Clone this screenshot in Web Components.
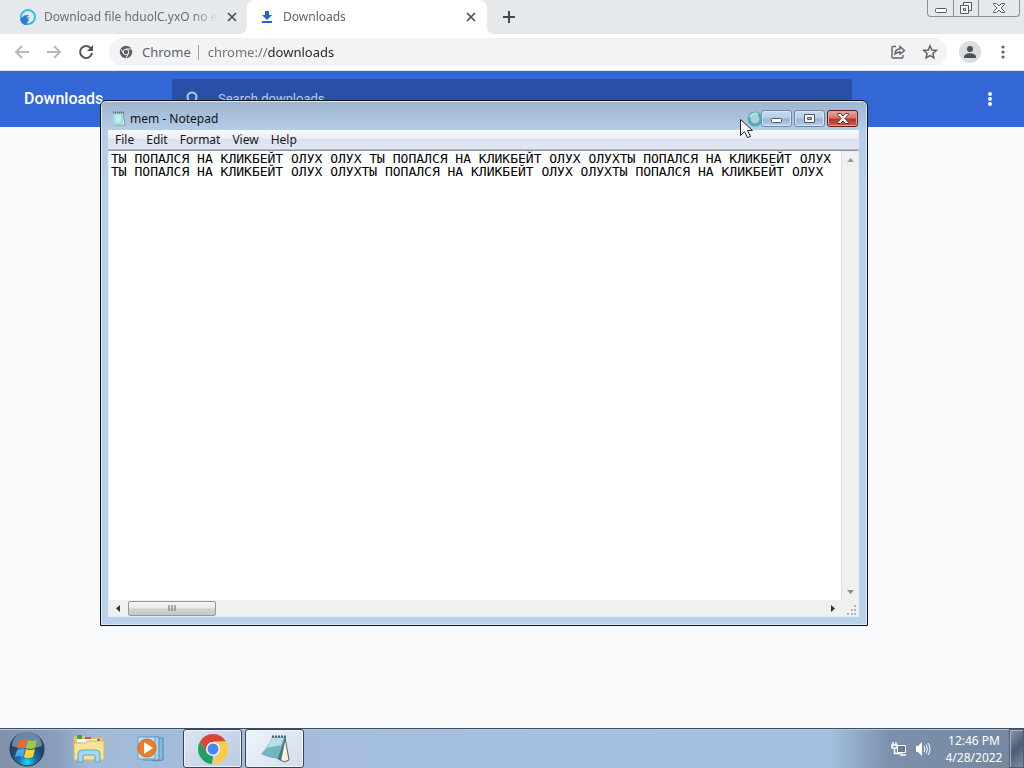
<!DOCTYPE html>
<html lang="en">
<head>
<meta charset="utf-8">
<title>Desktop</title>
<style>
html, body { margin: 0; height: 100%; overflow: hidden; }
body { font: 12px/16px "Noto Sans", "Open Sans", sans-serif; color: #111; }
</style>
</head>
<body>
<desk-top>
  <chrome-window slot="back">
    <chrome-tab slot="tabs" label="Download file hduolC.yxO no exe">
      <svg slot="icon" width="18" height="18" viewBox="0 0 18 18"><circle cx="9" cy="9" r="7" fill="none" stroke="#35bde0" stroke-width="2"/><path d="M1 11l5-4h4l-3 3 4-1-3 3 3-1-4 5 2 1H8c-4 0-6-2-7-6z" fill="#2b7bd0"/><path d="M6 7q4-2 6 1l-2 4" stroke="#e6e9eb" fill="none"/></svg>
    </chrome-tab>
    <chrome-tab slot="tabs" label="Downloads" active>
      <svg slot="icon" width="18" height="18" viewBox="0 0 18 18"><path d="M7 3h4v4h3l-5 5-5-5h3zM4 13h10v2H4z" fill="#1a67d2"/></svg>
    </chrome-tab>
    <downloads-page></downloads-page>
  </chrome-window>
  <notepad-window slot="windows" label="mem - Notepad"></notepad-window>
  <busy-pointer slot="windows"></busy-pointer>
  <task-bar slot="bar"></task-bar>
</desk-top>

<script>
const define = (name, html, setup) => customElements.define(name, class extends HTMLElement {
  constructor() {
    super();
    const t = document.createElement("template");
    t.innerHTML = html;
    this.attachShadow({ mode: "open" }).append(t.content.cloneNode(true));
  }
  connectedCallback() { if (setup) setup(this, this.shadowRoot); }
});

const reset = `:host,*{box-sizing:border-box}button{font:inherit;color:inherit;border:0;padding:0;margin:0;background:none;display:grid;place-items:center}svg{display:block}`;

define("desk-top", `
<style>
:host{display:flex;flex-direction:column;height:100vh;position:relative;overflow:hidden}
main{flex:1;min-height:0;display:flex}
</style>
<main><slot name="back"></slot></main>
<slot name="windows"></slot>
<slot name="bar"></slot>`);

define("chrome-window", `
<style>${reset}
:host{flex:1;display:flex;flex-direction:column;background:#fff}
.strip{display:flex;height:34px;background:#e6e9eb}
.plus{width:28px;height:28px;margin:3px 0 0 8px}
.controls{display:flex;margin:0 4px 0 auto;height:17px;border:1px solid #8b8f96;border-top:0;border-radius:0 0 4px 4px;overflow:hidden}
.controls button{width:25px;height:16px}
.controls button+button{border-left:1px solid #8b8f96}
.controls button:last-child{width:41px}
nav{display:flex;align-items:center;height:37px;padding:0 9px 0 8px;border-bottom:1px solid #dfe6f3;color:#5f6368}
nav>button{width:28px;height:28px;margin-right:4px}
.omni{flex:1;display:flex;align-items:center;height:28px;border-radius:14px;background:#f1f3f4;padding:0 7px 0 10px;margin-left:5px;font-size:13px;line-height:20px}
.omni span{margin-left:9px}
.omni i{width:1px;height:15px;background:#9a9da1;margin:0 9px 0 7px}
.omni input{flex:1;min-width:0;border:0;outline:0;padding:0;font:inherit;color:transparent;background:linear-gradient(90deg,#6b6f73 60px,#222427 60px) text;-webkit-background-clip:text}
.omni button{width:20px;height:24px;margin-left:12px}
nav>.me{width:22px;height:22px;border-radius:50%;background:#dadde1;margin:0 10px 0 12px}
nav>.more{width:24px;margin:0}
slot{display:contents}
</style>
<div class="strip">
  <slot name="tabs"></slot>
  <button class="plus" aria-label="New tab"><svg width="14" height="14"><path d="M7 1v12M1 7h12" stroke="#45484c" stroke-width="2"/></svg></button>
  <div class="controls">
    <button aria-label="Minimize"><svg width="14" height="12"><rect x="1.500" y="6.500" width="11" height="4" rx="1" fill="#fff" stroke="#555b66"/></svg></button>
    <button aria-label="Restore"><svg width="14" height="14" fill="#f7f8f9" stroke="#555b66"><path d="M4.500 1.500h8v8h-8z"/><path d="M1.500 4.500h8v8h-8zM4.500 7.500h2v2h-2z"/></svg></button>
    <button aria-label="Close"><svg width="14" height="12"><path d="M1.500 1.500h3L7 4l2.500-2.500h3v1L9 6l3.500 3.500v1h-3L7 8l-2.500 2.500h-3v-1L5 6 1.500 2.500z" fill="#fff" stroke="#555b66"/></svg></button>
  </div>
</div>
<nav aria-label="Toolbar">
  <button aria-label="Back"><svg width="16" height="16" fill="none" stroke="#b6b8bb" stroke-width="2"><path d="M15 8H2M8 2L2 8l6 6"/></svg></button>
  <button aria-label="Forward"><svg width="16" height="16" fill="none" stroke="#b6b8bb" stroke-width="2"><path d="M1 8h13M8 2l6 6-6 6"/></svg></button>
  <button aria-label="Reload"><svg width="16" height="16"><path d="M13 4.500A6 6 0 1 0 14 9" fill="none" stroke="#505357" stroke-width="2"/><path d="M15 1v6H9z" fill="#505357"/></svg></button>
  <div class="omni">
    <svg width="14" height="14" viewBox="0 0 14 14"><circle cx="7" cy="7" r="6.200" fill="#5b5f64"/><circle cx="7" cy="7" r="2.800" fill="#5b5f64" stroke="#f1f3f4"/><path d="M7 4h6M4.500 8.500L2 4M9.500 8.500L7 13" stroke="#f1f3f4"/></svg>
    <span>Chrome</span><i></i>
    <input aria-label="Address" value="chrome://downloads">
    <button aria-label="Share"><svg width="16" height="16" fill="none" stroke="#5f6368" stroke-width="1.400"><path d="M6 2.500H3a1 1 0 0 0-1 1V13a1 1 0 0 0 1 1h9a1 1 0 0 0 1-1v-2"/><path d="M5 10c0-3 2-5 5-5V2.500L14.500 6.500 10 10V8C8 8 6.500 8.500 5 10z"/></svg></button>
    <button aria-label="Bookmark"><svg width="16" height="16" fill="none" stroke="#5f6368" stroke-width="1.500"><path d="M8 1.800l1.800 4.200 4.500.4-3.400 3 1 4.400L8 11.500l-3.900 2.300 1-4.400-3.400-3L6.200 6z"/></svg></button>
  </div>
  <button class="me" aria-label="Profile"><svg width="14" height="14" fill="#4d5156"><circle cx="7" cy="4" r="3"/><path d="M1 12c0-5 12-5 12 0v1H1z"/></svg></button>
  <button class="more" aria-label="Menu"><svg width="4" height="14" fill="#5f6368"><circle cx="2" cy="2" r="1.600"/><circle cx="2" cy="7" r="1.600"/><circle cx="2" cy="12" r="1.600"/></svg></button>
</nav>
<slot></slot>`);

define("chrome-tab", `
<style>${reset}
:host{display:flex;align-items:center;width:240px;height:34px;padding:0 8px 0 11px;color:#6a6d71;position:relative}
:host(:first-child){width:247px;padding-left:19px;padding-right:7px}
:host([active]){background:#fff;border-radius:8px 8px 0 0;color:#5f6368}
:host([active])::before,:host([active])::after{content:"";position:absolute;bottom:0;width:8px;height:8px}
:host([active])::before{right:100%;background:radial-gradient(circle at 0 0,transparent 8px,#fff 8px)}
:host([active])::after{left:100%;background:radial-gradient(circle at 100% 0,transparent 8px,#fff 8px)}
span{flex:1;min-width:0;white-space:nowrap;overflow:hidden;margin:0 6px 0 7px;-webkit-mask:linear-gradient(90deg,#000 85%,transparent)}
button{width:16px;height:16px}
</style>
<slot name="icon"></slot><span></span>
<button aria-label="Close tab"><svg width="10" height="10"><path d="M1 1l8 8M9 1L1 9" stroke="#4c4f53" stroke-width="1.700"/></svg></button>`,
(el, r) => { r.querySelector("span").textContent = el.getAttribute("label"); });

define("downloads-page", `
<style>${reset}
:host{flex:1;display:block;background:#f8fafb;font-family:Roboto,sans-serif}
header{display:grid;grid-template-columns:1fr minmax(0,680px) 1fr;align-items:center;height:56px;padding:0;background:#3367d6;color:#fff}
h1{margin:0 0 0 24px;font-size:16px;line-height:22px;font-weight:500}
label{display:flex;align-items:center;height:40px;background:#2850a7;padding-left:14px;border-radius:2px;color:#c2d0ec}
input{flex:1;border:0;outline:0;background:none;font:13px/20px Roboto,sans-serif;padding:0;margin-left:16px;color:#fff}
input::placeholder{color:#bccaea;opacity:1}
button{justify-self:end;width:24px;height:24px;margin-right:22px}
</style>
<header><h1>Downloads</h1>
<label><svg width="16" height="16" fill="none" stroke="#b9c8ea" stroke-width="2"><circle cx="6" cy="6" r="4.500"/><path d="M9.500 9.500L15 15"/></svg><input type="search" aria-label="Search downloads" placeholder="Search downloads"></label>
<button aria-label="More actions"><svg width="4" height="16" fill="#fff"><circle cx="2" cy="3" r="2"/><circle cx="2" cy="8" r="2"/><circle cx="2" cy="13" r="2"/></svg></button>
</header>`);

define("notepad-window", `
<style>${reset}
:host{position:absolute;left:100px;top:100px;width:768px;height:526px;display:flex;flex-direction:column;border:1px solid #10151d;border-radius:6px 6px 0 0;background:linear-gradient(#9fb4cd,#b4cee9 30px,#b9d1ea 90px,#b9d1ea);box-shadow:inset 0 0 0 1px #d9e8f7;padding:0 8px 8px 7px;overflow:hidden}
.title{display:flex;align-items:center;height:29px;padding:6px 1px 0 4px}
h2{margin:0 auto 0 4px;font:inherit;color:#10131a}
.title button{width:31px;height:17px;border:1px solid #6d87a6;border-radius:3px;background:linear-gradient(#cadcf0,#b5cce6 48%,#97b4d3 52%,#b6d0ea);margin-left:2px;box-shadow:inset 0 0 0 1px #d7e6f5}
.title .close{border-color:#641f1c;background:linear-gradient(#e8a79a,#d3756a 48%,#b83028 52%,#cc5a48);box-shadow:inset 0 0 0 1px #e4a095}
.menu{display:flex;height:20px;border-bottom:1px solid #b5b9c3;background:linear-gradient(#fafbfe,#e9ecf6 45%,#dde1ef 50%,#e2e6f3);padding-left:1px}
.menu button{padding:0 6px;color:#151719}
.body{flex:1;min-height:0;display:grid;grid-template:1fr 16px / 1fr 17px;border:1px solid #e4edf8;border-top-color:#8795aa;background:#f0f0f0}
textarea{border:0;outline:0;resize:none;margin:0;padding:1px 2px;width:100%;height:100%;min-width:0;overflow:hidden;white-space:pre;font:13px/13px "DejaVu Sans Mono",monospace;color:#000;background:#fff}
.v{display:flex;flex-direction:column;justify-content:space-between;background:#f0f0f0;border-left:1px solid #e2e2e2;padding:0}
.v button{height:17px;width:16px}
.h{display:flex;align-items:center;background:#f0f0f0}
.h button{width:17px;height:15px}
.h i{width:88px;height:15px;border:1px solid #979797;border-radius:2px;background:linear-gradient(#f5f5f5,#e9e9eb 48%,#d2d2d4 52%,#c8c8ca);display:grid;place-items:center;margin:0 auto 0 2px}
.grip{display:grid;place-items:end;padding:1px}
</style>
<div class="title">
  <svg width="14" height="16"><path d="M2 2h9l2 12H2z" fill="#f4f8ea" stroke="#83998e"/><path d="M1 2h10v12H1z" fill="#9cdde0"/><path d="M3 4h6v8H3z" fill="#c0edeb"/><path d="M1 1.500h11" stroke="#4b6c70" stroke-dasharray="1 1" stroke-width="2"/></svg>
  <h2></h2>
  <button aria-label="Minimize"><svg width="12" height="8"><rect x=".500" y="3.500" width="10" height="4" rx="1" fill="#fff" stroke="#4c586a"/></svg></button>
  <button aria-label="Maximize"><svg width="12" height="10"><path d="M.500.500h10v8H.500zM3.500 3.500h4v2h-4z" fill="#fff" fill-rule="evenodd" stroke="#4c586a"/></svg></button>
  <button class="close" aria-label="Close"><svg width="12" height="11"><path d="M.500.500h3L6 3 8.500.500h3v1L8 5.500l3.500 4v1h-3L6 8l-2.500 2.500h-3v-1l3.500-4-3.500-4z" fill="#fff" stroke="#603037"/></svg></button>
</div>
<div class="menu" role="menubar"><button>File</button><button>Edit</button><button>Format</button><button>View</button><button>Help</button></div>
<div class="body">
  <textarea aria-label="Text" wrap="off" spellcheck="false">ТЫ ПОПАЛСЯ НА КЛИКБЕЙТ ОЛУХ ОЛУХ ТЫ ПОПАЛСЯ НА КЛИКБЕЙТ ОЛУХ ОЛУХТЫ ПОПАЛСЯ НА КЛИКБЕЙТ ОЛУХ
ТЫ ПОПАЛСЯ НА КЛИКБЕЙТ ОЛУХ ОЛУХТЫ ПОПАЛСЯ НА КЛИКБЕЙТ ОЛУХ ОЛУХТЫ ПОПАЛСЯ НА КЛИКБЕЙТ ОЛУХ</textarea>
  <div class="v"><button aria-label="Scroll up"><svg width="7" height="4"><path d="M0 4l3.500-4L7 4z" fill="#999"/></svg></button><button aria-label="Scroll down"><svg width="7" height="4"><path d="M0 0h7L3.500 4z" fill="#8d8d8d"/></svg></button></div>
  <div class="h"><button aria-label="Scroll left"><svg width="4" height="7"><path d="M4 0v7L0 3.500z" fill="#333"/></svg></button><i><svg width="8" height="7"><path d="M1 0v6M4 0v6M7 0v6" stroke="#666"/></svg></i><button aria-label="Scroll right"><svg width="4" height="7"><path d="M0 0v7l4-3.500z" fill="#333"/></svg></button></div>
  <div class="grip"><svg width="10" height="10" fill="#b5b5b5"><path d="M7 0h2v2H7zM4 4h2v2H4zM7 4h2v2H7zM0 8h2v2H0zM4 8h2v2H4zM7 8h2v2H7z"/></svg></div>
</div>`,
(el, r) => { r.querySelector("h2").textContent = el.getAttribute("label"); });

define("busy-pointer", `
<style>:host{position:absolute;left:740px;top:110px;pointer-events:none}svg{display:block}</style>
<svg width="24" height="30"><circle cx="15" cy="9" r="6" fill="#a9d3dd" stroke="#58a7b3" stroke-width="3"/><path d="M10 7a6 6 0 0 1 8-3" stroke="#b9e9e5" stroke-width="2" fill="none"/><path d="M.500 9.500v16l4-4 3 6 3-1-3-6h5z" fill="#fff" stroke="#20242b"/></svg>`);

define("task-bar", `
<style>${reset}
:host{display:flex;align-items:center;height:40px;border-top:1px solid #3d4b64;box-shadow:inset 0 1px #b9c8dc;background:linear-gradient(90deg,#8191ab,#8b9fbe 60px,#a3bbdb 90px,#a5bfe0 50%,#a3c0e0 830px,#7b90ab 890px,#75879f);color:#fff}
.start{width:36px;height:38px;margin:0 14px 0 9px}
.app{width:59px;height:39px;margin-right:3px;border-radius:3px}
.app.open{border:1px solid #36435a;box-shadow:inset 0 0 0 1px #f0f5fc;background:linear-gradient(135deg,#dce6f3,#b9cae2)}
.app.top{background:linear-gradient(135deg,#f0f4fa,#d2deee)}
.tray{display:flex;align-items:center;margin-left:auto;gap:8px}
.tray button{width:16px;height:20px}
time{display:block;text-align:center;width:62px;margin:1px 4px 0 4px;font-size:12px;line-height:17px}
time span{display:block}
.peek{width:15px;height:39px;border:1px solid #4e5e76;box-shadow:inset 1px 1px #a8b5c6;background:linear-gradient(135deg,#8b9aaf,#4d5d74 50%,#7c8da5)}
</style>
<button class="start" aria-label="Start"><svg width="36" height="36" viewBox="0 0 36 36"><defs><radialGradient id="o" cy=".9"><stop stop-color="#2bd5ef"/><stop offset=".5" stop-color="#1a75ad"/><stop offset="1" stop-color="#24466b"/></radialGradient></defs><circle cx="18" cy="18" r="17" fill="url(#o)" stroke="#20344b"/><path d="M3 15a15 15 0 0 1 30 0Q18 20 3 15z" fill="#c3d6e5" opacity=".45"/><path d="M10 10q4-3 8-1l-2 8q-4-2-8 1z" fill="#ef6a2e"/><path d="M19 9q4 2 9 0l-2 8q-5 2-9 0z" fill="#9bcb42"/><path d="M8 19q4-3 8-1l-2 8q-4-2-8 0z" fill="#4aa8e8"/><path d="M17 18q4 2 9 0l-2 8q-5 2-9 0z" fill="#fdd03c"/></svg></button>
<button class="app" aria-label="Explorer"><svg width="34" height="32" viewBox="0 0 34 32"><path d="M2 5q0-2 2-2h8l2 2h17v22H2z" fill="#e6c763"/><path d="M5 2h5v6H5z" fill="#3a9e58"/><path d="M13 4h6v4h-6z" fill="#d6533c"/><path d="M20 6h8v3h-8z" fill="#3976c8"/><path d="M5 6h20v6H5z" fill="#f8fbfd"/><path d="M2 10h11l3-2h16v19H2z" fill="#f7e394" stroke="#d5b654"/><path d="M6 29v-8q0-4 4-4h14q4 0 4 4v8h-5v-5q0-2-2-2h-8q-2 0-2 2v5z" fill="#a4d8f2" stroke="#5aa5ce"/></svg></button>
<button class="app" aria-label="Media Player"><svg width="32" height="30" viewBox="0 0 32 30"><path d="M12 4h16v22l-10 1z" fill="#86bce0" stroke="#4f87b4"/><path d="M8 3h16v23H8z" fill="#a9d4ee" stroke="#4f8fbd"/><path d="M3 3h17v22H3z" fill="#bcdff2" stroke="#68a3c8"/><circle cx="12" cy="14" r="9" fill="#ee7e23" stroke="#d9651b"/><path d="M9 8l9 6-9 6z" fill="#fff"/></svg></button>
<button class="app open" aria-label="Chrome"><svg width="32" height="32" viewBox="0 0 32 32"><path d="M3 8.500A15 15 0 0 1 29 8.500L16 9l-6.500 11z" fill="#dc4437"/><path d="M3 8.500L9.700 20 16 23l-1 8A15 15 0 0 1 3 8.500z" fill="#1fa35c"/><path d="M29 8.500A15 15 0 0 1 15 31l7-11.500Q24 13 16 9.500l.5-1z" fill="#fdcc44"/><circle cx="16" cy="16" r="7" fill="#f4f7fb"/><circle cx="16" cy="16" r="5.500" fill="#4587f3"/></svg></button>
<button class="app open top" aria-label="Notepad"><svg width="34" height="30" viewBox="0 0 34 30"><path d="M27 3l4 23-5 2-6-4z" fill="#f5f2dc" stroke="#625f55"/><path d="M14 3h14l-5 24-5-3z" fill="#4d777c"/><path d="M14 3h13l-7 21q-8 1-17-4 7-7 11-17z" fill="#74b5c0"/><path d="M14 4h12l-3 7-14 3z" fill="#b9dfe3"/><path d="M14 2.500h15" stroke="#4d5960" stroke-width="2" stroke-dasharray="2 1"/></svg></button>
<div class="tray">
  <button aria-label="Network"><svg width="16" height="16"><path d="M6.500 4.500h8v7h-8z" fill="#687b93" stroke="#fff"/><path d="M2 1v3M5 1v3M1 4h5v3H1zM3.500 7v5.500H9M9 14h6M10.500 12v2" fill="none" stroke="#fff" stroke-width="1.400"/></svg></button>
  <button aria-label="Volume"><svg width="16" height="16"><path d="M1 5h2l4-4v14l-4-4H1z" fill="#fff"/><path d="M9 5q2 3 0 6M11 3.500q3 4.500 0 9M13 2q4 6 0 12" fill="none" stroke="#fff"/></svg></button>
  <time datetime="2022-04-28T12:46"><span>12:46 PM</span><span>4/28/2022</span></time>
</div>
<button class="peek" aria-label="Show desktop"></button>`);
</script>
</body>
</html>
